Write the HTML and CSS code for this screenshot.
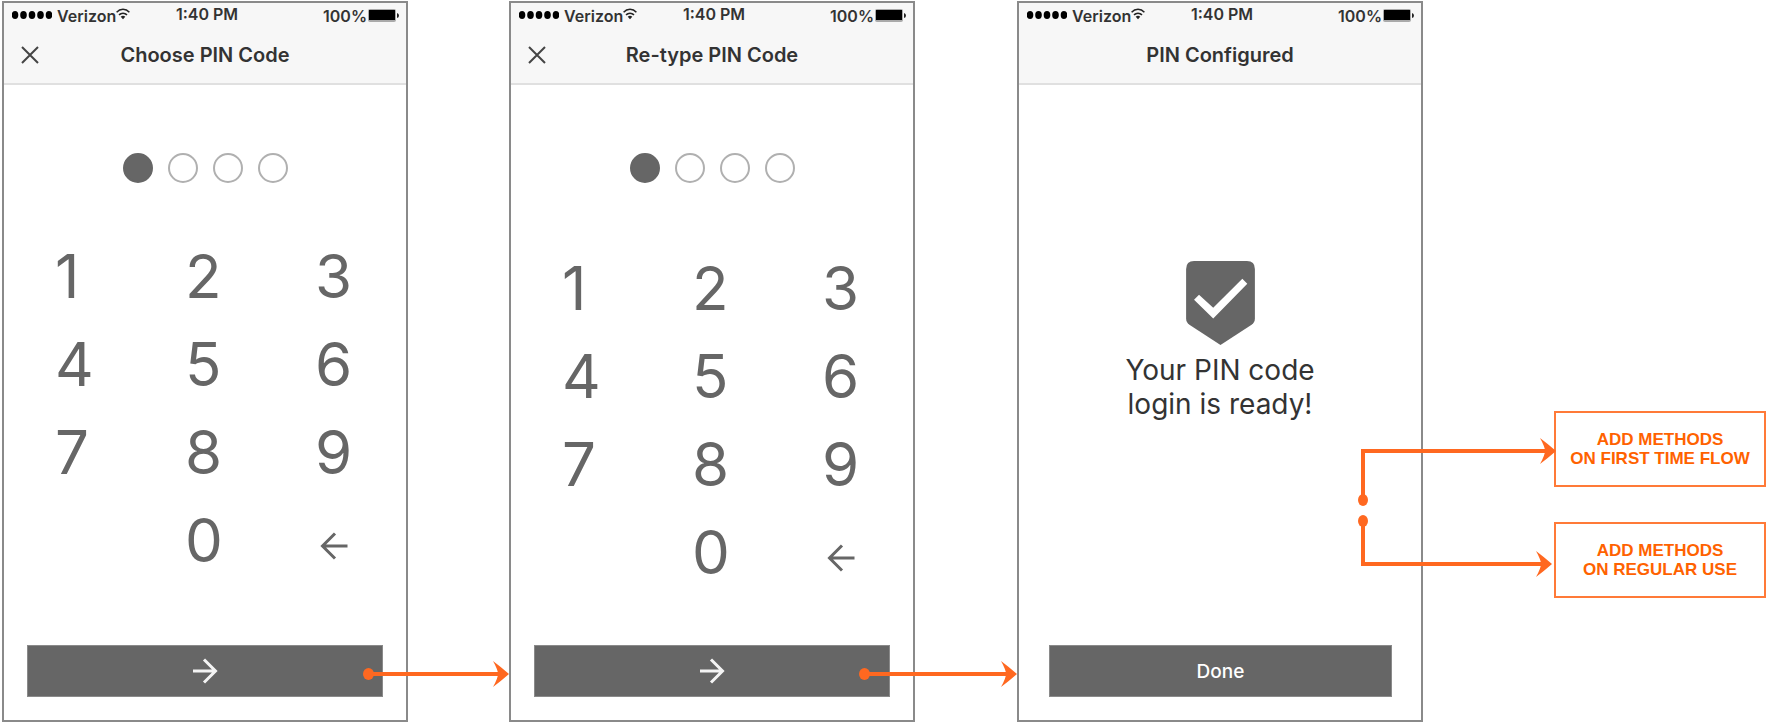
FILE: index.html
```html
<!DOCTYPE html>
<html lang="en">
<head>
<meta charset="utf-8">
<title>PIN code flow</title>
<link rel="stylesheet" href="styles.css">
</head>
<body>
<svg class="defs" aria-hidden="true">
  <symbol id="signal" viewBox="0 0 40 8"><g fill="#000"><ellipse cx="3" cy="4" rx="3.300" ry="4"/><ellipse cx="11.500" cy="4" rx="3.300" ry="4"/><ellipse cx="20" cy="4" rx="3.300" ry="4"/><ellipse cx="28.500" cy="4" rx="3.300" ry="4"/><ellipse cx="37" cy="4" rx="3.300" ry="4"/></g></symbol>
  <symbol id="wifi" viewBox="0 0 14 12"><g fill="none" stroke="#222" stroke-width="1.500"><path d="M.6 4.200C4.200.4 9.800.4 13.400 4.200"/><path d="M3 6.900C5.300 4.600 8.700 4.600 11 6.900"/></g><path d="M4.700 8.700C6 7.500 8 7.500 9.300 8.700L7 11.300Z" fill="#222"/></symbol>
  <symbol id="battery" viewBox="0 0 31 13"><rect x="0" y="0" width="28" height="13" rx="2" fill="#aaa"/><rect x="1" y="1" width="26" height="10" fill="#000"/><path d="M29 4q2 .5 2 2.500t-2 2.500z" fill="#222"/></symbol>
  <symbol id="close" viewBox="0 0 18 18"><path d="M1 1L17 17M17 1L1 17" fill="none" stroke="#444" stroke-width="2"/></symbol>
  <symbol id="back" viewBox="0 0 28 28"><path d="M15 1.500L2.500 14L15 26.500M2.500 14H27.500" fill="none" stroke="#666" stroke-width="3"/></symbol>
  <symbol id="next" viewBox="0 0 26 26"><path d="M12 1.500L23.500 13L12 24.500M23.500 13H1" fill="none" stroke="#f4f4f4" stroke-width="3"/></symbol>
  <symbol id="head" viewBox="0 0 16 26"><path d="M0 0Q8 6 16 13Q8 20 0 26Q5 17 5 13T0 0Z" fill="#ff6820"/></symbol>
</svg>
<main class="flow">
  <section class="phone">
    <header class="bar">
      <div class="status">
        <span class="carrier"><svg class="signal"><use href="#signal"/></svg><span>Verizon</span><svg class="wifi"><use href="#wifi"/></svg></span>
        <time>1:40 PM</time>
        <span class="power"><span>100%</span><svg class="battery"><use href="#battery"/></svg></span>
      </div>
      <div class="heading">
        <button class="close" aria-label="Close"><svg><use href="#close"/></svg></button>
        <h1>Choose PIN Code</h1>
      </div>
    </header>
    <div class="pin" role="img" aria-label="1 of 4 digits entered"><i class="full"></i><i></i><i></i><i></i></div>
    <div class="keypad">
      <button>1</button><button>2</button><button>3</button>
      <button>4</button><button>5</button><button>6</button>
      <button>7</button><button>8</button><button>9</button>
      <button class="zero">0</button><button class="erase" aria-label="Delete"><svg><use href="#back"/></svg></button>
    </div>
    <button class="action" aria-label="Next"><svg><use href="#next"/></svg></button>
  </section>

  <div class="link"><div class="arrow"><i class="knob"></i><i class="line"></i><svg class="head"><use href="#head"/></svg></div></div>

  <section class="phone confirm">
    <header class="bar">
      <div class="status">
        <span class="carrier"><svg class="signal"><use href="#signal"/></svg><span>Verizon</span><svg class="wifi"><use href="#wifi"/></svg></span>
        <time>1:40 PM</time>
        <span class="power"><span>100%</span><svg class="battery"><use href="#battery"/></svg></span>
      </div>
      <div class="heading">
        <button class="close" aria-label="Close"><svg><use href="#close"/></svg></button>
        <h1>Re-type PIN Code</h1>
      </div>
    </header>
    <div class="pin" role="img" aria-label="1 of 4 digits entered"><i class="full"></i><i></i><i></i><i></i></div>
    <div class="keypad">
      <button>1</button><button>2</button><button>3</button>
      <button>4</button><button>5</button><button>6</button>
      <button>7</button><button>8</button><button>9</button>
      <button class="zero">0</button><button class="erase" aria-label="Delete"><svg><use href="#back"/></svg></button>
    </div>
    <button class="action" aria-label="Next"><svg><use href="#next"/></svg></button>
  </section>

  <div class="link"><div class="arrow long"><i class="knob"></i><i class="line"></i><svg class="head"><use href="#head"/></svg></div></div>

  <section class="phone ready">
    <header class="bar">
      <div class="status">
        <span class="carrier"><svg class="signal"><use href="#signal"/></svg><span>Verizon</span><svg class="wifi"><use href="#wifi"/></svg></span>
        <time>1:40 PM</time>
        <span class="power"><span>100%</span><svg class="battery"><use href="#battery"/></svg></span>
      </div>
      <div class="heading"><h1>PIN Configured</h1></div>
    </header>
    <div class="result">
      <svg class="shield" viewBox="0 0 208 254" aria-hidden="true"><path d="M24 0H184Q208 0 208 24V174Q208 186 198 193L104 254L10 193Q0 186 0 174V24Q0 0 24 0Z" fill="#666"/><path d="M24 117L39 102L82 141L170 54L185 69L82 174Z" fill="#fff"/></svg>
      <p>Your PIN code<br>login is ready!</p>
    </div>
    <button class="action">Done</button>
  </section>

  <div class="link">
    <div class="branch up"><i class="knob"></i><svg class="head"><use href="#head"/></svg></div>
    <div class="branch down"><i class="knob"></i><svg class="head"><use href="#head"/></svg></div>
  </div>

  <aside class="notes">
    <p>ADD METHODS<br>ON FIRST TIME FLOW</p>
    <p>ADD METHODS<br>ON REGULAR USE</p>
  </aside>
</main>
</body>
</html>
```
FILE: styles.css
```css
* { box-sizing: border-box; }

body {
  margin: 0;
  background: #fff;
  color: #333;
  font-family: Inter, "Liberation Sans", sans-serif;
}

button {
  border: 0;
  padding: 0;
  background: none;
  color: inherit;
  font: inherit;
}

svg { display: block; flex: none; }
.defs { position: absolute; width: 0; height: 0; }

.flow {
  display: grid;
  grid-template-columns: 406fr 101fr 406fr 102fr 406fr 131fr 212fr;
  min-height: 100vh;
  padding: 1px 3px 3px 2px;
}

.phone {
  display: flex;
  flex-direction: column;
  border: 2px solid #8a8a8a;
  padding-bottom: 23px;
}

/* Status and title bar */
.bar {
  height: 82px;
  background: #f7f7f7;
  border-bottom: 2px solid #e0e0e0;
}

.status {
  display: grid;
  grid-template-columns: 1fr auto 1fr;
  align-items: start;
  padding: 1px 7px 0 8px;
  font: 600 16px/20px Inter, "Liberation Sans", sans-serif;
}

.status time { padding-left: 3px; }
.carrier, .power { display: flex; padding-top: 2px; }
.carrier span { margin-left: 5px; }
.power { justify-content: flex-end; gap: 1px; }
.signal { width: 40px; height: 8px; margin-top: 5px; }
.wifi { width: 14px; height: 12px; margin-top: 2px; }
.battery { width: 31px; height: 13px; margin-top: 3px; }

.heading {
  position: relative;
  display: flex;
  align-items: center;
  justify-content: center;
  height: 58px;
}

.heading h1 {
  margin: 0;
  font-size: 20px;
  line-height: 24px;
  font-weight: 600;
}

.close { position: absolute; left: 17px; }
.close svg { width: 18px; height: 18px; }

/* PIN entry */
.pin {
  display: flex;
  justify-content: center;
  gap: 15px;
  padding-top: 68px;
}

.pin i {
  width: 30px;
  height: 30px;
  border: 2px solid #b0b0b0;
  border-radius: 50%;
}

.pin .full { background: #666; border-color: #666; }

.keypad {
  display: grid;
  grid-template-columns: 130px 130px 40px;
  grid-auto-rows: 88px;
  justify-content: center;
  margin-top: 49px;
  color: #666;
  font-size: 60px;
  line-height: 88px;
}

.confirm .keypad { margin-top: 61px; }
.keypad button { text-align: left; }
.keypad .zero { grid-column: 2; }
.keypad .erase { padding: 12px 0 0 5px; }
.erase svg { width: 28px; height: 28px; }

.action {
  display: flex;
  align-items: center;
  justify-content: center;
  height: 52px;
  margin: auto 23px 0;
  border: 1px solid #8a8a8a;
  background: #666;
  color: #fff;
  font-size: 19px;
  font-weight: 500;
}

.action svg { width: 26px; height: 26px; }
.ready .action { margin: auto 29px 0 30px; }

/* Confirmation */
.result {
  display: flex;
  flex-direction: column;
  align-items: center;
  padding-top: 176px;
}

.shield { width: 69px; height: 84px; }

.result p {
  margin: 8px 0 0;
  font-size: 28px;
  line-height: 34px;
  text-align: center;
}

/* Flow arrows, drawn across the phone edges */
.link { position: relative; }

.arrow {
  position: absolute;
  left: -45px;
  right: 0;
  bottom: 35px;
  display: flex;
  align-items: center;
}

.arrow.long { left: -56px; }
.line { flex: 1; height: 4px; margin: 0 -6px 0 -2px; background: #ff6820; }
.head { width: 16px; height: 26px; }

.knob {
  width: 11px;
  height: 12px;
  border-radius: 50%;
  background: #ff6820;
}

.branch {
  position: absolute;
  left: -62px;
  border-left: 4px solid #ff6820;
}

.branch.up { top: 448px; right: 6px; height: 51px; border-top: 4px solid #ff6820; }
.branch.down { top: 520px; right: 10px; height: 45px; border-bottom: 4px solid #ff6820; }
.branch .knob { position: absolute; left: -7px; width: 10px; }
.branch .head { position: absolute; right: -8px; }
.up .knob { bottom: -6px; }
.down .knob { top: -6px; }
.up .head { top: -15px; }
.down .head { bottom: -15px; }

.notes {
  display: flex;
  flex-direction: column;
  gap: 35px;
  padding-top: 410px;
}

.notes p {
  margin: 0;
  padding: 17px 0;
  border: 2px solid #ff7a38;
  color: #ff6200;
  font: bold 17px/19px "Liberation Sans", Arial, sans-serif;
  text-align: center;
  white-space: nowrap;
}
```
